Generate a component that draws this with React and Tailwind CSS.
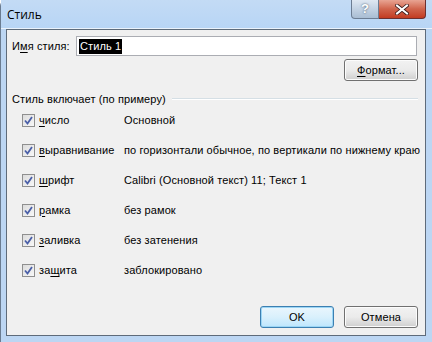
import React from "react";

const F = { fontFamily: '"Liberation Sans", Arial, sans-serif' };

function Check() {
  return (
    <div className="w-[13px] h-[13px] border border-[#8f8f8f] bg-gradient-to-br from-[#dcdcdc] to-[#f8f8f8] flex items-center justify-center shrink-0">
      <svg width="9" height="9" viewBox="0 0 9 9">
        <path d="M1 4.5 L3.5 7.5 L8 1" stroke="#4a5fa8" strokeWidth="1.8" fill="none" />
      </svg>
    </div>
  );
}

function U({ c }) {
  return <span className="underline underline-offset-2">{c}</span>;
}

const rows = [
  [<><U c="ч" />исло</>, "Основной"],
  [<><U c="в" />ыравнивание</>, "по горизонтали обычное, по вертикали по нижнему краю"],
  [<><U c="ш" />рифт</>, "Calibri (Основной текст) 11; Текст 1"],
  [<><U c="р" />амка</>, "без рамок"],
  [<><U c="з" />аливка</>, "без затенения"],
  [<>за<U c="щ" />ита</>, "заблокировано"],
];

function Btn({ children, def }) {
  return (
    <div
      className={`w-[74px] h-[22px] rounded-[3px] border flex items-center justify-center text-black ${
        def
          ? "border-[#3c7fb1] bg-gradient-to-b from-[#eaf6fd] via-[#d9f0fc] to-[#bee6fd] shadow-[inset_0_0_0_1px_#9cd6f5]"
          : "border-[#707070] bg-gradient-to-b from-[#f2f2f2] via-[#ebebeb] to-[#cfcfcf] shadow-[inset_0_0_0_1px_#fcfcfc]"
      }`}
    >
      {children}
    </div>
  );
}

export default function App() {
  return (
    <div className="w-[432px] h-[342px] bg-[#bcd6f3] rounded-t-[6px] flex flex-col border-l border-[#6a7c91]" style={F}>
      <div className="h-[29px] flex items-start justify-between bg-gradient-to-b from-[#c3dbf5] to-[#b8d5f5] border-b border-[#eaf2fb]">
        <div className="pl-[6px] pt-[6px] text-[12px] text-black" style={{ fontFamily: '"Open Sans", "Noto Sans", sans-serif' }}>
          Стиль
        </div>
        <div className="flex mr-[6px]">
          <div className="w-[28px] h-[19px] rounded-bl-[4px] border border-t-0 border-[#6c7d93] bg-gradient-to-b from-[#dfe8f2] via-[#c3d2e3] to-[#a9bdd3] flex items-center justify-center text-[13px] font-bold text-white [text-shadow:0_0_2px_#3a4a5e]">
            ?
          </div>
          <div className="w-[47px] h-[19px] rounded-br-[4px] border border-l-0 border-t-0 border-[#6c3030] bg-gradient-to-b from-[#e8a493] via-[#d0644c] to-[#c23a20] flex items-center justify-center">
            <svg width="14" height="11" viewBox="0 0 14 11">
              <path d="M2 1.5 L12 9.5 M12 1.5 L2 9.5" stroke="#3a1a1a" strokeWidth="3.6" strokeLinecap="square" />
              <path d="M2 1.5 L12 9.5 M12 1.5 L2 9.5" stroke="#ffffff" strokeWidth="2" strokeLinecap="square" />
            </svg>
          </div>
        </div>
      </div>
      <div className="ml-[5px] w-[420px] h-[307px] border border-[#5e6b7a] bg-[#f0f0f0] flex flex-col text-[11px] tracking-[0.1px] text-black">
        <div className="flex items-center h-[20px] mt-[6px]">
          <div className="w-[69px] pl-[5px]">
            И<U c="м" />я стиля:
          </div>
          <div className="w-[341px] h-[20px] border border-[#abadb3] bg-white flex items-center pl-[2px]">
            <span className="bg-black text-white px-[1px] leading-[15px]">Стиль 1</span>
          </div>
        </div>
        <div className="flex justify-end pr-[7px] mt-[3px]">
          <Btn>
            <U c="Ф" />ормат...
          </Btn>
        </div>
        <div className="flex items-center mt-[11px] pl-[5px] pr-[7px] h-[14px]">
          <span>Стиль включает (по примеру)</span>
          <div className="flex-1 ml-[6px] h-[2px] border-t border-[#d5dfe5] border-b border-b-white" />
        </div>
        <div className="flex flex-col -mt-px">
          {rows.map(([a, b], i) => (
            <div key={i} className="h-[30px] flex items-center pl-[15px] whitespace-nowrap">
              <Check />
              <div className="w-[89px] shrink-0 pl-[4px]">{a}</div>
              <div>{b}</div>
            </div>
          ))}
        </div>
        <div className="flex justify-end gap-[10px] pr-[7px] mt-[21px]">
          <Btn def>OK</Btn>
          <Btn>Отмена</Btn>
        </div>
      </div>
    </div>
  );
}
